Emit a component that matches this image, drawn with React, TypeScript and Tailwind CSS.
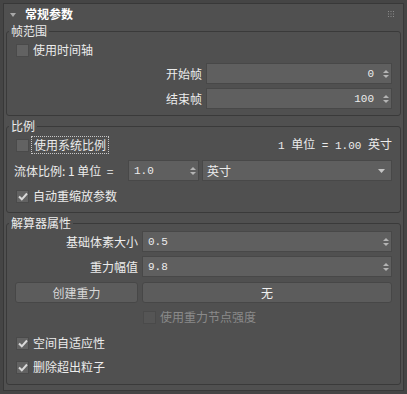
import type { ReactNode } from 'react'

const font = "font-['Noto_Sans_CJK_SC','Noto_Sans',sans-serif]"
const mono = "font-['Liberation_Mono','Noto_Sans_CJK_SC',monospace] text-[11px]"

function Spinner() {
  return (
    <svg width="6" height="10" viewBox="0 0 6 10" className="shrink-0">
      <path d="M0 4 L3 1 L6 4 Z" fill="#b4b4b4" />
      <path d="M0 6 L3 9 L6 6 Z" fill="#b4b4b4" />
    </svg>
  )
}

function NumInput({ value, align = 'right', className = '' }: { value: string; align?: 'left' | 'right'; className?: string }) {
  return (
    <div
      className={`flex h-[21px] items-center border border-[#484848] bg-[#5f5f5f] pl-[5px] pr-[2px] text-[#ececec] ${className}`}
    >
      <span className={`flex-1 ${mono} ${align === 'right' ? 'text-right pr-[9px]' : 'text-left'}`}>{value}</span>
      <Spinner />
    </div>
  )
}

function Check({ checked, disabled }: { checked?: boolean; disabled?: boolean }) {
  return (
    <span
      className={`flex h-[13px] w-[13px] shrink-0 items-center justify-center border ${
        disabled ? 'border-[#4a4a4a] bg-[#555555]' : 'border-[#4a4a4a] bg-[#626262]'
      }`}
    >
      {checked && (
        <svg width="10" height="9" viewBox="0 0 10 9">
          <path d="M1 4.5 L3.8 7.3 L9 1.5" stroke="#d9d9d9" strokeWidth="2" fill="none" />
        </svg>
      )}
    </span>
  )
}

function CheckRow({ label, checked, disabled, focus }: { label: string; checked?: boolean; disabled?: boolean; focus?: boolean }) {
  return (
    <div className="flex h-[20px] items-center gap-[4px]">
      <Check checked={checked} disabled={disabled} />
      <span
        className={`${disabled ? 'text-[#8a8a8a]' : 'text-[#ececec]'} ${
          focus ? 'border border-dotted border-[#c8c8c8] px-[2px] py-[1px] -ml-[2px]' : ''
        }`}
      >
        {label}
      </span>
    </div>
  )
}

function Group({ title, children, className = '' }: { title: string; children: ReactNode; className?: string }) {
  return (
    <fieldset className={`rounded-[3px] border border-[#3a3a3a] ${className}`}>
      <legend className="ml-[2px] px-[2px] leading-[14px] text-[#ececec]">{title}</legend>
      {children}
    </fieldset>
  )
}

export default function App() {
  return (
    <div className={`h-[394px] w-[407px] bg-[#454545] pl-[3px] pt-[3px] text-[12px] leading-[14px] ${font}`}>
      <div className="h-[388px] w-[401px] border border-[#383838] bg-[#505050] px-[2px]">
        {/* header */}
        <div className="flex h-[20px] items-center pl-[4px] pr-[4px]">
          <svg width="6" height="4" viewBox="0 0 6 4" className="mt-[1px]">
            <path d="M0 0 L6 0 L3 4 Z" fill="#a8a8a8" />
          </svg>
          <span className="ml-[9px] font-bold text-white">常规参数</span>
          <svg width="6" height="6" viewBox="0 0 6 6" className="ml-auto mr-[3px]">
            {[0, 2.5, 5].map(x =>
              [0, 2.5, 5].map(y => <rect key={`${x}-${y}`} x={x} y={y} width="1" height="1" fill="#8c8c8c" />)
            )}
          </svg>
        </div>

        {/* 帧范围 */}
        <Group title="帧范围">
          <div className="pb-[6px] pl-[9px] pr-[8px] pt-[2px]">
            <CheckRow label="使用时间轴" />
            <div className="mt-[3px] flex items-center justify-end gap-[4px]">
              <span className="text-[#ececec]">开始帧</span>
              <NumInput value="0" className="w-[186px]" />
            </div>
            <div className="mt-[4px] flex items-center justify-end gap-[4px]">
              <span className="text-[#ececec]">结束帧</span>
              <NumInput value="100" className="w-[186px]" />
            </div>
          </div>
        </Group>

        {/* 比例 */}
        <Group title="比例" className="mt-[3px]">
          <div className="pb-[6px] pl-[9px] pr-[8px] pt-[2px]">
            <div className="flex items-center">
              <CheckRow label="使用系统比例" focus />
              <span className="ml-auto whitespace-pre text-[#ececec]">
                <span className={mono}>1 </span>单位<span className={mono}> = 1.00 </span>英寸
              </span>
            </div>
            <div className="mt-[5px] flex items-center">
              <span className="-ml-[2px] whitespace-pre text-[#ececec]">流体比例: 1 单位  =</span>
              <NumInput value="1.0" align="left" className="ml-auto w-[71px]" />
              <div className="ml-[3px] flex h-[21px] w-[190px] items-center border border-[#484848] bg-[#5f5f5f] pl-[4px] pr-[6px] text-[#ececec]">
                <span className="flex-1">英寸</span>
                <svg width="7" height="4" viewBox="0 0 7 4">
                  <path d="M0 0 L7 0 L3.5 4 Z" fill="#c4c4c4" />
                </svg>
              </div>
            </div>
            <div className="mt-[5px]">
              <CheckRow label="自动重缩放参数" checked />
            </div>
          </div>
        </Group>

        {/* 解算器属性 */}
        <Group title="解算器属性" className="mt-[3px]">
          <div className="grid grid-cols-[1fr_250px] items-center gap-x-[4px] pb-[7px] pl-[9px] pr-[8px] pt-[1px]">
            <span className="text-right text-[#ececec]">基础体素大小</span>
            <NumInput value="0.5" align="left" />
            <span className="mt-[4px] text-right text-[#ececec]">重力幅值</span>
            <NumInput value="9.8" align="left" className="mt-[4px]" />
            <button className="-ml-[1px] mt-[5px] h-[21px] rounded-[3px] border border-[#474747] bg-[#5c5c5c] text-[#d8d8d8]">
              创建重力
            </button>
            <button className="mt-[5px] h-[21px] rounded-[3px] border border-[#474747] bg-[#5c5c5c] text-[#f0f0f0]">
              无
            </button>
            <div className="col-start-2 mt-[4px] pl-[1px]">
              <CheckRow label="使用重力节点强度" disabled />
            </div>
            <div className="col-span-2 mt-[6px]">
              <CheckRow label="空间自适应性" checked />
            </div>
            <div className="col-span-2 mt-[4px]">
              <CheckRow label="删除超出粒子" checked />
            </div>
          </div>
        </Group>
      </div>
    </div>
  )
}
